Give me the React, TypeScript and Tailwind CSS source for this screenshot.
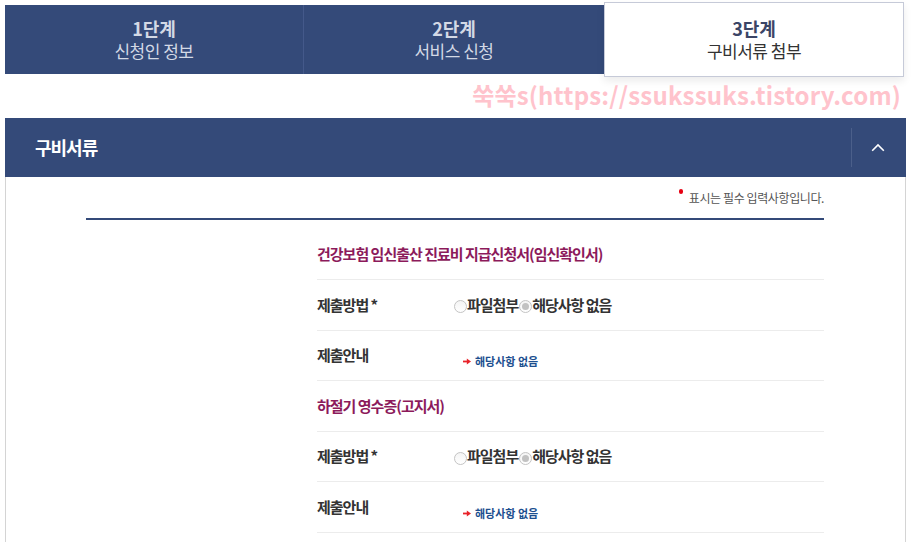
import React from "react";

const FONT = { fontFamily: '"Noto Sans CJK KR", "Noto Sans", sans-serif' };

function Radio({ checked }: { checked?: boolean }) {
  return (
    <span className="w-[13px] h-[13px] rounded-full border border-[#c4c4c4] bg-gradient-to-b from-[#f4f4f4] to-white flex items-center justify-center shrink-0 mt-[3px]">
      {checked && <span className="w-[7px] h-[7px] rounded-full bg-[#c2c2c2]" />}
    </span>
  );
}

function Arrow() {
  return (
    <svg width="8" height="7" viewBox="0 0 8 7" className="shrink-0">
      <path d="M0 3.5 H5" stroke="#e8232a" strokeWidth="1.8" />
      <path d="M3.8 0.4 L8 3.5 L3.8 6.6 Z" fill="#e8232a" />
    </svg>
  );
}

function Section({ title, h }: { title: string; h: [string, string, string] }) {
  return (
    <>
      <div className={`${h[0]} border-b border-[#ececec] flex items-center`}>
        <span className="text-[15px] font-bold tracking-[-1px] text-[#8c1a5b]">{title}</span>
      </div>
      <div className={`${h[1]} border-b border-[#ececec] flex items-center`}>
        <span className="w-[137px] text-[15px] font-bold tracking-[-1px] text-[#333]">제출방법 *</span>
        <div className="flex items-center">
          <Radio />
          <span className="text-[15px] font-bold tracking-[-1px] text-[#333]">파일첨부</span>
          <span className="w-[1px]" />
          <Radio checked />
          <span className="text-[15px] font-bold tracking-[-1px] text-[#333]">해당사항 없음</span>
        </div>
      </div>
      <div className={`${h[2]} border-b border-[#ececec] flex items-center`}>
        <span className="w-[146px] text-[15px] font-bold tracking-[-1px] text-[#333]">제출안내</span>
        <div className="flex items-center gap-[4px] mt-[12px]">
          <Arrow />
          <span className="text-[11px] font-semibold text-[#1d4f8f]">해당사항 없음</span>
        </div>
      </div>
    </>
  );
}

export default function App() {
  return (
    <div className="w-[911px] h-[542px] bg-white overflow-hidden px-[5px]" style={FONT}>
      {/* Steps */}
      <div className="flex mt-[5px] h-[69px]">
        <div className="w-[299px] bg-[#344a79] border-r border-[#44598a] flex flex-col items-center justify-center gap-[1px] text-[#d3d9e5]">
          <span className="text-[18px] font-bold leading-[22px]">1단계</span>
          <span className="text-[17px] leading-[22px] tracking-[-0.5px]">신청인 정보</span>
        </div>
        <div className="w-[300px] bg-[#344a79] flex flex-col items-center justify-center gap-[1px] text-[#d3d9e5]">
          <span className="text-[18px] font-bold leading-[22px]">2단계</span>
          <span className="text-[17px] leading-[22px] tracking-[-0.5px]">서비스 신청</span>
        </div>
        <div className="w-[300px] -mt-[3px] h-[75px] bg-white border border-[#c6cad8] shadow-[0_4px_8px_rgba(0,0,0,0.08)] flex flex-col items-center justify-center gap-[1px]">
          <span className="text-[18px] font-bold leading-[22px] text-[#3b4566]">3단계</span>
          <span className="text-[17px] leading-[22px] tracking-[-0.5px] text-[#333]">구비서류 첨부</span>
        </div>
      </div>

      {/* Watermark */}
      <div className="h-[44px] flex items-center justify-end pr-[5px]">
        <span className="text-[24px] font-bold text-[#ffc3cc] leading-none tracking-[0.2px] -mt-[2px]">
          쑥쑥s(https://ssukssuks.tistory.com)
        </span>
      </div>

      {/* Accordion header */}
      <div className="h-[59px] bg-[#344a79] flex items-center justify-between">
        <span className="pl-[30px] text-[18px] font-bold tracking-[-1px] text-white">구비서류</span>
        <div className="h-[39px] w-[55px] border-l border-[#4b5f8a] flex items-center justify-center pr-[3px]">
          <svg width="14" height="9" viewBox="0 0 14 9">
            <path d="M1.2 7.8 L7 2 L12.8 7.8" stroke="white" strokeWidth="1.6" fill="none" />
          </svg>
        </div>
      </div>

      {/* Content */}
      <div className="border-x border-[#d4d4d4] h-[400px] pl-[80px] pr-[81px]">
        <div className="h-[41px] flex items-center justify-end">
          <span className="w-[4px] h-[5px] rounded-full bg-[#e60012] -mt-[12px] mr-[6px]" />
          <span className="text-[12px] tracking-[-0.4px] text-[#555]">표시는 필수 입력사항입니다.</span>
        </div>
        <div className="h-[2px] bg-[#344a79]" />
        <div className="pl-[231px] pt-[9px]">
          <Section title="건강보험 임신출산 진료비 지급신청서(임신확인서)" h={["h-[51px]", "h-[51px]", "h-[50px]"]} />
          <Section title="하절기 영수증(고지서)" h={["h-[51px]", "h-[50px]", "h-[51px]"]} />
        </div>
      </div>
    </div>
  );
}
